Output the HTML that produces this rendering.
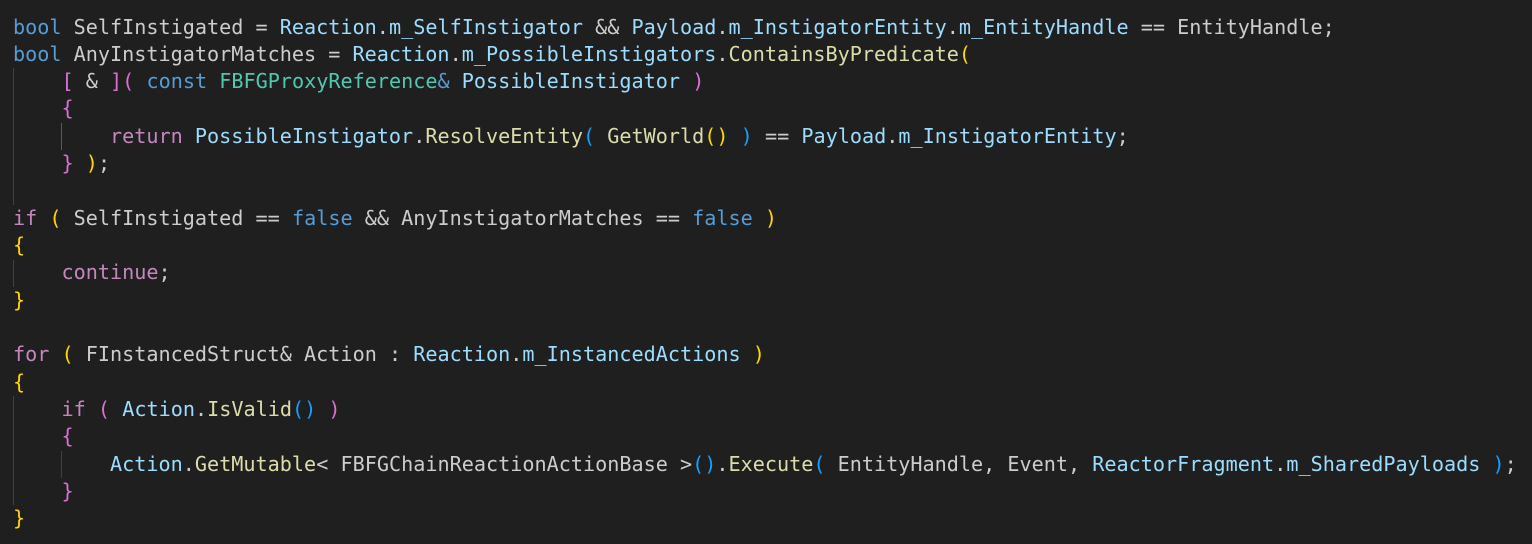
<!DOCTYPE html>
<html><head><meta charset="utf-8"><style>
html,body{margin:0;padding:0;background:#1f1f1f;width:1532px;height:544px;overflow:hidden}
#c{position:relative;padding-top:13.5px;padding-left:13px;font-family:"DejaVu Sans Mono","Liberation Mono",monospace;font-size:20.15px;line-height:27.33px;color:#cccccc}
.l{height:27.33px;white-space:pre}
.k{color:#569cd6}.c{color:#c586c0}.v{color:#9cdcfe}.f{color:#dcdcaa}.t{color:#4ec9b0}
.y{color:#ffd700}.p{color:#da70d6}.b{color:#179fff}
.g{position:absolute;width:1px;background:#404040}
</style></head><body><div id="c"><div class="g" style="left:13px;top:68.2px;height:136.6px"></div><div class="g" style="left:61px;top:122.8px;height:27.4px;background:#5a5a5a"></div><div class="g" style="left:13px;top:259.5px;height:27.4px"></div><div class="g" style="left:13px;top:396.1px;height:109.3px"></div><div class="g" style="left:61px;top:450.8px;height:27.4px"></div>
<div class="l"><span class="k">bool</span> SelfInstigated = <span class="v">Reaction</span>.<span class="v">m_SelfInstigator</span> &amp;&amp; <span class="v">Payload</span>.<span class="v">m_InstigatorEntity</span>.<span class="v">m_EntityHandle</span> == EntityHandle;</div>
<div class="l"><span class="k">bool</span> AnyInstigatorMatches = <span class="v">Reaction</span>.<span class="v">m_PossibleInstigators</span>.<span class="f">ContainsByPredicate</span><span class="y">(</span></div>
<div class="l">    <span class="p">[</span> &amp; <span class="p">](</span> <span class="k">const</span> <span class="t">FBFGProxyReference</span><span class="k">&amp;</span> <span class="v">PossibleInstigator</span> <span class="p">)</span></div>
<div class="l">    <span class="p">{</span></div>
<div class="l">        <span class="c">return</span> <span class="v">PossibleInstigator</span>.<span class="f">ResolveEntity</span><span class="b">(</span> <span class="f">GetWorld</span><span class="y">()</span> <span class="b">)</span> == <span class="v">Payload</span>.<span class="v">m_InstigatorEntity</span>;</div>
<div class="l">    <span class="p">}</span> <span class="y">)</span>;</div>
<div class="l"> </div>
<div class="l"><span class="c">if</span> <span class="y">(</span> SelfInstigated == <span class="k">false</span> &amp;&amp; AnyInstigatorMatches == <span class="k">false</span> <span class="y">)</span></div>
<div class="l"><span class="y">{</span></div>
<div class="l">    <span class="c">continue</span>;</div>
<div class="l"><span class="y">}</span></div>
<div class="l"> </div>
<div class="l"><span class="c">for</span> <span class="y">(</span> FInstancedStruct&amp; Action : <span class="v">Reaction</span>.<span class="v">m_InstancedActions</span> <span class="y">)</span></div>
<div class="l"><span class="y">{</span></div>
<div class="l">    <span class="c">if</span> <span class="p">(</span> <span class="v">Action</span>.<span class="f">IsValid</span><span class="b">()</span> <span class="p">)</span></div>
<div class="l">    <span class="p">{</span></div>
<div class="l">        <span class="v">Action</span>.<span class="f">GetMutable</span>&lt; FBFGChainReactionActionBase &gt;<span class="b">()</span>.<span class="f">Execute</span><span class="b">(</span> EntityHandle, Event, <span class="v">ReactorFragment</span>.<span class="v">m_SharedPayloads</span> <span class="b">)</span>;</div>
<div class="l">    <span class="p">}</span></div>
<div class="l"><span class="y">}</span></div>
</div></body></html>
